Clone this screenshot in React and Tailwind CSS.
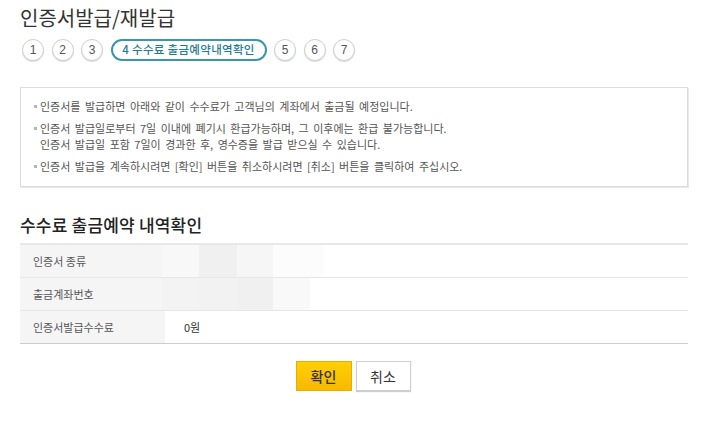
import React from 'react';

const KR = { fontFamily: '"Noto Sans CJK KR", "Noto Sans", sans-serif' };

const STEPS = ['1', '2', '3', 'ACTIVE', '5', '6', '7'];

const NOTICES = [
  ['인증서를 발급하면 아래와 같이 수수료가 고객님의 계좌에서 출금될 예정입니다.'],
  [
    '인증서 발급일로부터 7일 이내에 폐기시 환급가능하며, 그 이후에는 환급 불가능합니다.',
    '인증서 발급일 포함 7일이 경과한 후, 영수증을 발급 받으실 수 있습니다.',
  ],
  ['인증서 발급을 계속하시려면 [확인] 버튼을 취소하시려면 [취소] 버튼을 클릭하여 주십시오.'],
];

// pixelated (blurred-out) personal data
const BLUR = [
  ['bg-[#f8f8f8] w-[37px]', 'bg-[#f0f0f0] w-[38px]', 'bg-[#f6f6f6] w-[36px]', 'bg-[#fcfcfc] w-[51px]'],
  ['bg-[#f3f3f3] w-[37px]', 'bg-[#f2f2f2] w-[38px]', 'bg-[#f0f0f0] w-[36px]', 'bg-[#f9f9f9] w-[37px]'],
];

function Step({ label }) {
  if (label === 'ACTIVE') {
    return (
      <div className="h-[22px] w-[156px] rounded-full border-2 border-[#3a97aa] flex items-center justify-center text-[11.5px] font-medium text-[#1f7d92] tracking-[0.3px]">
        4 수수료 출금예약내역확인
      </div>
    );
  }
  return (
    <div
      className="h-[22px] w-[22px] rounded-full border border-[#cfcfcf] bg-white shadow-[0_1px_1px_#dddddd] flex items-center justify-center text-[12px] text-[#555]"
      style={{ fontFamily: '"Liberation Sans", Arial, sans-serif' }}
    >
      {label}
    </div>
  );
}

function Row({ label, blur, value, last }) {
  return (
    <div className={`flex h-[33px] border-b ${last ? 'border-[#cccccc]' : 'border-[#e6e6e6]'}`}>
      <div className="w-[145px] bg-[#f5f5f5] flex items-center pl-[13px] text-[11px] text-[#555]">{label}</div>
      <div className="flex-1 flex items-stretch">
        {blur ? (
          <div className="flex ml-[-3px]">
            {blur.map((c, i) => (
              <div key={i} className={c} />
            ))}
          </div>
        ) : (
          <div className="flex items-center pl-[19px] text-[11px] text-[#333]">{value}</div>
        )}
      </div>
    </div>
  );
}

export default function App() {
  return (
    <div className="w-[720px] h-[425px] bg-white overflow-hidden" style={KR}>
      <div className="ml-[20px] w-[668px] pt-[4px]">
        <h1 className="text-[20px] leading-[28px] text-[#333] font-normal">인증서발급/재발급</h1>

        <div className="mt-[7px] flex items-center gap-[7.5px] ml-[2px]">
          {STEPS.map((s, i) => (
            <Step key={i} label={s} />
          ))}
        </div>

        {/* notice box */}
        <div className="mt-[26px] border border-[#dcdcdc] shadow-[1px_1px_0_#e8e8e8] pt-[10px] pb-[12px] pl-[13px] flex flex-col gap-[6px]">
          {NOTICES.map((lines, i) => (
            <div key={i} className="flex text-[11px] leading-[16px] text-[#555] [word-spacing:2px]">
              <span className="w-[6px] flex items-start pt-[7px]">
                <span className="w-[3px] h-[3px] bg-[#b5b5b5]" />
              </span>
              <div className="flex flex-col">
                {lines.map((l, j) => (
                  <span key={j}>{l}</span>
                ))}
              </div>
            </div>
          ))}
        </div>

        <h2 className="mt-[26px] text-[17px] leading-[24px] font-medium text-[#222] tracking-[0.2px]">수수료 출금예약 내역확인</h2>

        <div className="mt-[6px] border-t-2 border-[#e8e8e8]">
          <Row label="인증서 종류" blur={BLUR[0]} />
          <Row label="출금계좌번호" blur={BLUR[1]} />
          <Row label="인증서발급수수료" value="0원" last />
        </div>

        <div className="mt-[17px] flex justify-center gap-[4px] pr-[2px]">
          <button className="w-[56px] h-[30px] bg-gradient-to-b from-[#ffd000] to-[#f7b900] border border-[#e9ac00] text-[14px] font-medium text-[#333]">
            확인
          </button>
          <button className="w-[55px] h-[30px] bg-white border border-[#cfcfcf] shadow-[0_1px_1px_#cccccc] text-[14px] text-[#333]">
            취소
          </button>
        </div>
      </div>
    </div>
  );
}
